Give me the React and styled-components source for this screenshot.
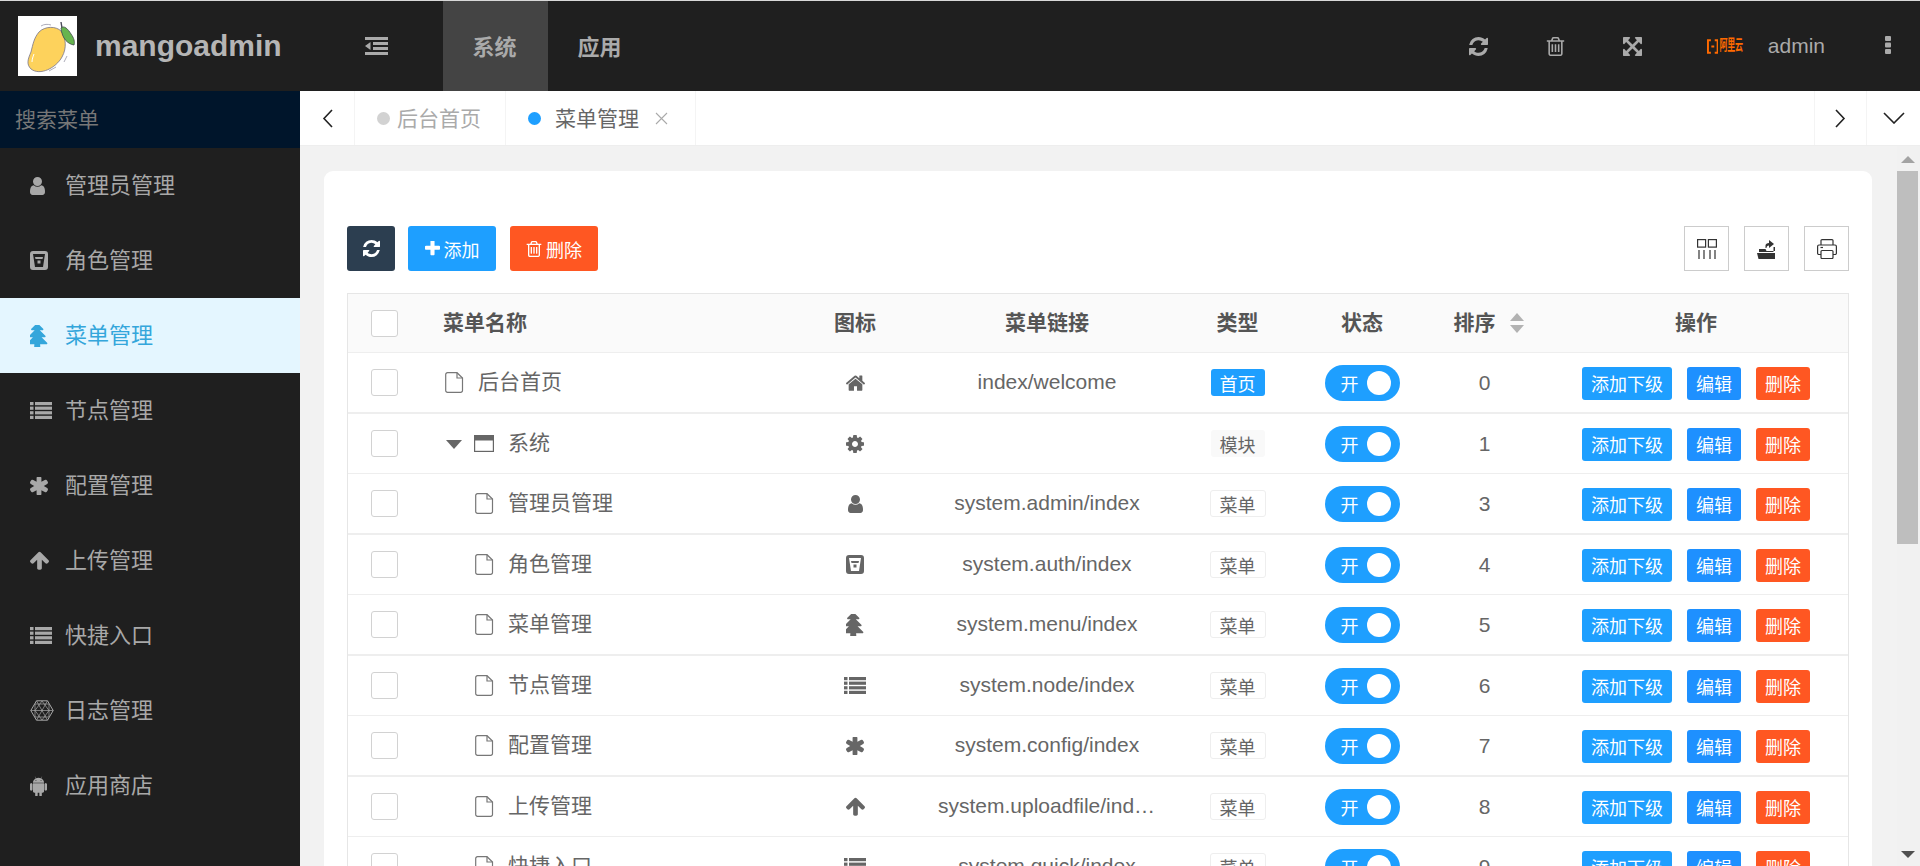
import React from "react";
import styled, { createGlobalStyle } from "styled-components";

const FONT = `"Liberation Sans", "Noto Sans CJK SC", sans-serif`;

const Global = createGlobalStyle`
  html, body { margin: 0; padding: 0; height: 100%; overflow: hidden; background: #f2f2f2; }
  body { font-family: ${FONT}; }
  * { box-sizing: border-box; }
`;

const Page = styled.div`
  width: 1920px; height: 866px; overflow: hidden; display: flex; flex-direction: column;
  border-top: 1px solid #d8d8d8;
`;
const Header = styled.header`
  height: 90px; flex: none; background: #1f1f1f; display: flex; align-items: stretch;
`;
const Brand = styled.div`
  width: 300px; flex: none; display: flex; align-items: center; padding-left: 18px; gap: 18px;
`;
const LogoBox = styled.div`
  width: 59px; height: 60px; background: #fff; flex: none; display: flex;
`;
const BrandName = styled.span`
  color: #b5b5b5; font-size: 30px; font-weight: 700; line-height: 1;
`;
const ToggleBtn = styled.div`
  width: 143px; flex: none; display: flex; align-items: center; padding-left: 65px; color: #aaa;
`;
const TopTab = styled.div`
  width: 105px; flex: none; display: flex; align-items: center; justify-content: center;
  font-size: 22px; font-weight: 700; color: #aaa; padding: 0 2px 3px 0;
  background: ${(p) => (p.$active ? "#444" : "transparent")};
`;
const HeaderRight = styled.div`
  margin-left: auto; display: flex; align-items: center; padding-right: 29px;
`;
const HeadIcon = styled.div`
  width: 77px; display: flex; justify-content: center; color: #aaa;
`;
const Aliyun = styled.div`
  display: flex; align-items: center; gap: 1px; margin-left: 36px; color: #ff6a00; width: 36px;
`;
const AliyunText = styled.span`
  font-size: 8px; font-weight: 700; line-height: 8px; white-space: nowrap; transform: scaleY(1.8); letter-spacing: -0.2px;
`;
const AdminName = styled.span`
  margin-left: 25px; font-size: 21px; color: #aaa;
`;
const Dots = styled.div`
  margin-left: 60px; color: #aaa; display: flex; margin-top: -3px;
`;
const Body = styled.div`
  flex: 1; display: flex; min-height: 0;
`;
const Sidebar = styled.aside`
  width: 300px; flex: none; background: #1f1f1f;
`;
const SearchBox = styled.div`
  height: 57px; background: #00152b; color: #777; font-size: 21px; padding: 0 0 3px 15px;
  display: flex; align-items: center;
`;
const SideItem = styled.div`
  height: 75px; display: flex; align-items: center; padding-left: 30px;
  background: ${(p) => (p.$active ? "#e4f6ff" : "transparent")};
  color: ${(p) => (p.$active ? "#34a6db" : "#a8a8a8")};
`;
const SideIconSlot = styled.span`
  width: 35px; flex: none; display: flex; align-items: center;
`;
const SideLabel = styled.span`
  font-size: 22px; line-height: 1;
`;
const Main = styled.main`
  flex: 1; min-width: 0; display: flex; flex-direction: column;
`;
const TabBar = styled.div`
  height: 55px; flex: none; background: #fff; display: flex; border-bottom: 1px solid #eee;
`;
const ArrowCell = styled.div`
  width: ${(p) => p.$w}px; flex: none; display: flex; align-items: center; justify-content: center;
  border-left: ${(p) => (p.$left ? "1px solid #f4f4f4" : "none")};
  border-right: ${(p) => (p.$right ? "1px solid #f4f4f4" : "none")};
`;
const PageTab = styled.div`
  width: ${(p) => p.$w}px; flex: none; display: flex; align-items: center;
  padding-left: 22px; border-right: 1px solid #f4f4f4;
  color: ${(p) => (p.$active ? "#666" : "#aaa")}; font-size: 21px;
`;
const TabText = styled.span`
  padding-bottom: 3px;
`;
const TabDot = styled.i`
  width: 13px; height: 13px; border-radius: 50%; flex: none; margin-right: ${(p) => p.$gap}px;
  background: ${(p) => p.$color};
`;
const TabClose = styled.span`
  display: flex; margin-left: 16px;
`;
const TabSpacer = styled.div`
  flex: 1;
`;
const ContentRow = styled.div`
  flex: 1; min-height: 0; display: flex;
`;
const Scroller = styled.div`
  flex: 1; min-width: 0; overflow: hidden; padding: 25px 25px 0 24px;
`;
const Card = styled.section`
  background: #fff; border-radius: 9px 9px 0 0; padding: 55px 23px 0; height: 1200px;
`;
const Toolbar = styled.div`
  display: flex; height: 45px; align-items: stretch;
`;
const ToolBtn = styled.div`
  width: ${(p) => p.$w}px; margin-right: ${(p) => p.$mr}px; background: ${(p) => p.$bg};
  border-radius: 3px; display: flex; align-items: center; justify-content: center; gap: 4px;
  color: #fff; font-size: 18px;
`;
const ToolRight = styled.div`
  margin-left: auto; display: flex; gap: 15px;
`;
const ToolSquare = styled.div`
  width: 45px; border: 1px solid #ccc; display: flex; align-items: center; justify-content: center;
`;
const Table = styled.div`
  margin-top: 22px; border: 1px solid #e6e6e6; border-bottom: none; color: #666;
`;
const COLS = "74px 370px 126px 258px 123px 126px 119px 1fr";
const HeadRow = styled.div`
  display: grid; grid-template-columns: ${COLS}; height: 59px; background: #fafafa;
  border-bottom: 1px solid #eee; align-items: center;
`;
const Row = styled.div`
  display: grid; grid-template-columns: ${COLS}; height: ${(p) => (p.$thick ? 61 : 60)}px;
  border-bottom: ${(p) => (p.$thick ? 2 : 1)}px solid #eee; align-items: center;
`;
const CenterCell = styled.div`
  display: flex; align-items: center; justify-content: center; font-size: 21px; min-width: 0;
`;
const HeadCenter = styled(CenterCell)`
  font-weight: 700; color: #555; padding-bottom: 5px;
`;
const HeadSort = styled(HeadCenter)`
  padding-left: 8px;
`;
const HeadName = styled.div`
  font-weight: 700; color: #555; font-size: 21px; padding: 0 0 5px 21px;
`;
const Check = styled.div`
  width: 27px; height: 27px; border: 1px solid #d2d2d2; border-radius: 3px; background: #fff; margin-left: 23px;
`;
const NameCell = styled.div`
  display: flex; align-items: center; font-size: 21px; padding-left: ${(p) => p.$indent}px;
`;
const NameText = styled.span`
  padding-bottom: 5px;
`;
const FileIcon = styled.span`
  display: flex; margin-right: 14px;
`;
const Caret = styled.i`
  width: 0; height: 0; margin-right: 12px; margin-top: 2px;
  border-left: 8.5px solid transparent; border-right: 8.5px solid transparent; border-top: 9px solid #666;
`;
const LinkText = styled.div`
  padding: 0 20px 1px; font-size: 21px; text-align: center; white-space: nowrap; overflow: hidden; text-overflow: ellipsis;
`;
const TableIcon = styled.span`
  display: flex; color: #666;
`;
const Tag = styled.span`
  width: ${(p) => (p.$kind === "menu" ? 56 : 54)}px; height: 27px; border-radius: 3px; font-size: 18px;
  display: flex; align-items: center; justify-content: center;
  background: ${(p) => (p.$kind === "home" ? "#1e9fff" : p.$kind === "module" ? "#f9f9f9" : "#fff")};
  color: ${(p) => (p.$kind === "home" ? "#fff" : "#666")};
  border: ${(p) => (p.$kind === "menu" ? "1px solid #eee" : "none")};
`;
const Switch = styled.div`
  width: 75px; height: 36px; border-radius: 18px; background: #1e9fff; color: #fff; font-size: 18px;
  display: flex; align-items: center; padding-left: 16px; margin-top: 1px;
`;
const Knob = styled.i`
  width: 24px; height: 24px; border-radius: 50%; background: #fff; margin-left: 8px;
`;
const Sort = styled.span`
  display: flex; flex-direction: column; gap: 4px; margin: 5px 0 0 14px;
`;
const SortTri = styled.i`
  width: 0; height: 0; border-left: 7.5px solid transparent; border-right: 7.5px solid transparent;
  border-bottom: ${(p) => (p.$up ? "8px solid #b2b2b2" : "none")};
  border-top: ${(p) => (p.$up ? "none" : "8px solid #b2b2b2")};
`;
const Ops = styled.div`
  display: flex; padding-left: 38px; margin-top: 1px;
`;
const OpBtn = styled.span`
  width: ${(p) => p.$w}px; height: 33px; margin-right: 15px; border-radius: 3px; background: ${(p) => p.$bg};
  color: #fff; font-size: 18px; display: flex; align-items: center; justify-content: center;
`;
const ScrollTrack = styled.div`
  width: 23px; flex: none; background: #f1f1f1; display: flex; flex-direction: column; align-items: center;
  padding-right: 2px;
`;
const ScrollUp = styled.i`
  width: 0; height: 0; margin-top: 10px; margin-bottom: 8px; border-left: 7.5px solid transparent;
  border-right: 7.5px solid transparent; border-bottom: 7px solid #a3a3a3;
`;
const ScrollThumb = styled.div`
  width: 100%; height: 373px; background: #bebebe;
`;
const ScrollDown = styled.i`
  width: 0; height: 0; margin-top: auto; margin-bottom: 8px; border-left: 7.5px solid transparent;
  border-right: 7.5px solid transparent; border-top: 7px solid #505050;
`;

const GLYPHS = {
  user: { vb: "256 128 1280 1536", w: 15, h: 18, d: "M1536 1399q0 109-62.5 187t-150.5 78h-854q-88 0-150.5-78t-62.5-187q0-85 8.5-160.5t31.5-152 58.5-131 94-89 134.5-34.5q131 128 313 128t313-128q76 0 134.5 34.5t94 89 58.5 131 31.5 152 8.5 160.5zm-256-887q0 159-112.5 271.5t-271.5 112.5-271.5-112.5-112.5-271.5 112.5-271.5 271.5-112.5 271.5 112.5 112.5 271.5z" },
  tree: { vb: "288 128 1216 1600", w: 18, h: 22, d: "M1504 1472q0 26-19 45t-45 19h-462q1 17 6 87.5t5 108.5q0 25-18 43t-43 18h-320q-25 0-43-18t-18-43q0-38 5-108.5t6-87.5h-462q-26 0-45-19t-19-45 19-45l402-403h-229q-26 0-45-19t-19-45 19-45l402-403h-197q-26 0-45-19t-19-45 19-45l384-384q19-19 45-19t45 19l384 384q19 19 19 45t-19 45-45 19h-197l402 403q19 19 19 45t-19 45-45 19h-229l402 403q19 19 19 45z" },
  asterisk: { vb: "180 180 1432 1432", w: 18, h: 18, d: "M1546 1050q46 26 59.5 77.5t-12.5 97.5l-64 110q-26 46-77.5 59.5t-97.5-12.5l-266-153v307q0 52-38 90t-90 38h-128q-52 0-90-38t-38-90v-307l-266 153q-46 26-97.5 12.5t-77.5-59.5l-64-110q-26-46-12.5-97.5t59.5-77.5l266-154-266-154q-46-26-59.5-77.5t12.5-97.5l64-110q26-46 77.5-59.5t97.5 12.5l266 153v-307q0-52 38-90t90-38h128q52 0 90 38t38 90v307l266-153q46-26 97.5-12.5t77.5 59.5l64 110q26 46 12.5 97.5t-59.5 77.5l-266 154z" },
  arrowUp: { vb: "117 160 1558 1500", w: 19, h: 19, d: "M1675 971q0 51-37 90l-75 75q-38 38-91 38-54 0-90-38l-294-293v704q0 52-37.5 84.5t-90.5 32.5h-128q-53 0-90.5-32.5t-37.5-84.5v-704l-294 293q-36 38-90 38t-90-38l-75-75q-38-38-38-90 0-53 38-91l651-651q35-37 90-37 54 0 91 37l651 651q37 39 37 91z" },
  android: { vb: "0 120 1408 1580", w: 17, h: 20, d: "M493 483q16 0 27.5-11.5t11.5-27.5-11.5-27.5-27.5-11.5-27 11.5-11 27.5 11 27.5 27 11.5zm422 0q16 0 27-11.5t11-27.5-11-27.5-27-11.5-27.5 11.5-11.5 27.5 11.5 27.5 27.5 11.5zm-812 184q42 0 72 30t30 72v430q0 43-29.5 73t-72.5 30-73-30-30-73v-430q0-42 30-72t73-30zm1060 19v666q0 46-32 78t-77 32h-75v227q0 43-30 73t-73 30-73-30-30-73v-227h-138v227q0 43-30 73t-73 30q-42 0-72-30t-30-73l-1-227h-74q-46 0-78-32t-32-78v-666h918zm-232-405q107 55 171 153.5t64 215.5h-925q0-117 64-215.5t172-153.5l-71-131q-7-13 5-20 13-6 20 6l72 132q95-42 201-42t201 42l72-132q7-12 20-6 12 7 5 20zm477 488v430q0 43-30 73t-73 30q-42 0-72-30t-30-73v-430q0-43 30-72.5t72-29.5q43 0 73 29.5t30 72.5z" },
  home: { vb: "96 224 1600 1312", w: 19, h: 16, d: "M1472 992v480q0 26-19 45t-45 19h-384v-384h-256v384h-384q-26 0-45-19t-19-45v-480q0-1 .5-3t.5-3l575-474 575 474q1 2 1 6zm223-69l-62 74q-8 9-21 11h-3q-13 0-21-7l-692-577-692 577q-12 8-24 7-13-2-21-11l-62-74q-8-10-7-23.5t11-21.5l719-599q32-26 76-26t76 26l244 204v-195q0-14 9-23t23-9h192q14 0 23 9t9 23v408l219 182q10 8 11 21.5t-7 23.5z" },
  cog: { vb: "128 128 1536 1536", w: 18, h: 18, d: "M1152 896q0-106-75-181t-181-75-181 75-75 181 75 181 181 75 181-75 75-181zm512-109v222q0 12-8 23t-20 13l-185 28q-19 54-39 91 35 50 107 138 10 12 10 25t-9 23q-27 37-99 108t-94 71q-12 0-26-9l-138-108q-44 23-91 38-16 136-29 186-7 28-36 28h-222q-14 0-24.5-8.5t-11.5-21.5l-28-184q-49-16-90-37l-141 107q-10 9-25 9-14 0-25-11-126-114-165-168-7-10-7-23 0-12 8-23 15-21 51-66.5t54-70.5q-27-50-41-99l-183-27q-13-2-21-12.5t-8-23.5v-222q0-12 8-23t19-13l186-28q14-46 39-92-40-57-107-138-10-12-10-24 0-10 9-23 26-36 98.5-107.5t94.5-71.5q13 0 26 10l138 107q44-23 91-38 16-136 29-186 7-28 36-28h222q14 0 24.5 8.5t11.5 21.5l28 184q49 16 90 37l142-107q9-9 24-9 13 0 25 10 129 119 165 170 7 8 7 22 0 12-8 23-15 21-51 66.5t-54 70.5q26 50 41 98l183 28q13 2 21 12.5t8 23.5z" },
  refresh: { vb: "128 128 1536 1536", w: 19, h: 19, d: "M1639 1056q0 5-1 7-64 268-268 434.5t-478 166.5q-146 0-282.5-55t-243.5-157l-129 129q-19 19-45 19t-45-19-19-45v-448q0-26 19-45t45-19h448q26 0 45 19t19 45-19 45l-137 137q71 66 161 102t187 36q134 0 250-65t186-179q11-17 53-117 8-23 30-23h192q13 0 22.5 9.5t9.5 22.5zm25-800v448q0 26-19 45t-45 19h-448q-26 0-45-19t-19-45 19-45l138-138q-148-137-349-137-134 0-250 65t-186 179q-11 17-53 117-8 23-30 23h-199q-13 0-22.5-9.5t-9.5-22.5v-7q65-268 270-434.5t480-166.5q146 0 284 55.5t245 156.5l130-129q19-19 45-19t45 19 19 45z" },
  trash: { vb: "128 128 1536 1536", w: 19, h: 19, d: "M704 736v576q0 14-9 23t-23 9h-64q-14 0-23-9t-9-23v-576q0-14 9-23t23-9h64q14 0 23 9t9 23zm256 0v576q0 14-9 23t-23 9h-64q-14 0-23-9t-9-23v-576q0-14 9-23t23-9h64q14 0 23 9t9 23zm256 0v576q0 14-9 23t-23 9h-64q-14 0-23-9t-9-23v-576q0-14 9-23t23-9h64q14 0 23 9t9 23zm128 724v-948h-896v948q0 22 7 40.5t14.5 27 10.5 8.5h832q3 0 10.5-8.5t14.5-27 7-40.5zm-672-1076h448l-48-117q-7-9-17-11h-317q-10 2-17 11zm928 32v64q0 14-9 23t-23 9h-96v948q0 83-47 143.5t-113 60.5h-832q-66 0-113-58.5t-47-141.5v-952h-96q-14 0-23-9t-9-23v-64q0-14 9-23t23-9h309l70-167q15-37 54-63t79-26h320q40 0 79 26t54 63l70 167h309q14 0 23 9t9 23z" },
  expand: { vb: "128 128 1536 1536", w: 19, h: 19, d: "M1411 541l-355 355 355 355 144-144q29-31 70-14 39 17 39 59v448q0 26-19 45t-45 19h-448q-42 0-59-40-17-39 14-69l144-144-355-355-355 355 144 144q31 30 14 69-17 40-59 40h-448q-26 0-45-19t-19-45v-448q0-42 40-59 39-17 69 14l144 144 355-355-355-355-144 144q-19 19-45 19-12 0-24-5-40-17-40-59v-448q0-26 19-45t45-19h448q42 0 59 40 17 39-14 69l-144 144 355 355 355-355-144-144q-31-30-14-69 17-40 59-40h448q26 0 45 19t19 45v448q0 42-39 59-13 5-25 5-26 0-45-19z" },
  plus: { vb: "192 192 1408 1408", w: 15, h: 15, d: "M1600 736v192q0 40-28 68t-68 28h-416v416q0 40-28 68t-68 28h-192q-40 0-68-28t-28-68v-416h-416q-40 0-68-28t-28-68v-192q0-40 28-68t68-28h416v-416q0-40 28-68t68-28h192q40 0 68 28t28 68v416h416q40 0 68 28t28 68z" },
};

const Fa = ({ name, w, h }) => {
  const g = GLYPHS[name];
  return (
    <svg width={w || g.w} height={h || g.h} viewBox={g.vb} fill="currentColor">
      <path d={g.d} />
    </svg>
  );
};

const Mango = () => (
  <svg width="59" height="60" viewBox="0 0 59 60">
    <path d="M13 53C8 48 10 43 13 36C15 28 16 22 21 16C27 10 38 10 43 15C48 22 49 32 44 41C38 52 22 60 13 53Z" fill="#fdd25c" stroke="#77758c" strokeWidth="0.8" />
    <path d="M43 6L44 12" stroke="#4a4a5a" strokeWidth="1.4" />
    <path d="M43 12C46 9 50 13 53 18C56 22 57 26 56 29C50 28 44 23 43 12Z" fill="#66b44e" stroke="#3f4a4a" strokeWidth="0.8" />
    <path d="M14 46C14 43 15 41 16 38" stroke="#fff" strokeWidth="1" fill="none" />
    <path d="M23 10C26 8 30 8 33 9M49 40L46 46M31 55L38 51" stroke="#8a8a9c" strokeWidth="0.7" fill="none" />
  </svg>
);

const OutdentGlyph = () => (
  <svg width="23" height="18" viewBox="0 0 23 18" fill="currentColor">
    <path d="M0 0H23V3H0ZM8 5H23V8H8ZM8 10H23V13H8ZM0 15H23V18H0ZM0 9L5.5 5V13Z" />
  </svg>
);

const DotsGlyph = () => (
  <svg width="6" height="18" viewBox="0 0 6 18" fill="currentColor">
    <rect x="0" y="0" width="6" height="5" rx="1" />
    <rect x="0" y="6.5" width="6" height="5" rx="1" />
    <rect x="0" y="13" width="6" height="5" rx="1" />
  </svg>
);

const ListIcon = () => (
  <svg width="22" height="17" viewBox="0 0 22 17" fill="currentColor">
    {[0, 4.6, 9.2, 13.8].map((y) => (
      <g key={y}>
        <rect x="0" y={y} width="3.5" height="3.2" />
        <rect x="5" y={y} width="17" height="3.2" />
      </g>
    ))}
  </svg>
);

const RoleIcon = () => (
  <svg width="18" height="19" viewBox="0 0 18 19" fill="currentColor" fillRule="evenodd">
    <path d="M3 0H15A3 3 0 0 1 18 3V16A3 3 0 0 1 15 19H3A3 3 0 0 1 0 16V3A3 3 0 0 1 3 0ZM3 3L5 16H13L15 3Z" />
    <path d="M5 6H13L12.5 8H5.5ZM7.5 9.5H10.5V12.5H7.5Z" />
  </svg>
);

const HexIcon = () => (
  <svg width="24" height="21" viewBox="0 0 24 21" fill="none" stroke="currentColor" strokeWidth="1">
    <path d="M6.5 .8H17.5L23.2 10.5L17.5 20.2H6.5L.8 10.5Z" />
    <path d="M6.5 .8L17.5 20.2M17.5 .8L6.5 20.2M.8 10.5H23.2M5 4H19L19 17H5ZM12 1L5 10.5L12 20L19 10.5Z" strokeWidth="0.7" />
  </svg>
);

const FileGlyph = () => (
  <svg width="19" height="21" viewBox="0 0 19 21" fill="none" stroke="#777" strokeWidth="1.2">
    <path d="M2.5 .7H12L17.5 6V18.5A1.8 1.8 0 0 1 15.7 20.3H2.5A1.8 1.8 0 0 1 .7 18.5V2.5A1.8 1.8 0 0 1 2.5 .7Z" />
    <path d="M12 .7V6H17.5" />
  </svg>
);

const WindowGlyph = () => (
  <svg width="20" height="17" viewBox="0 0 20 17">
    <rect x=".6" y=".6" width="18.8" height="15.8" fill="none" stroke="#666" strokeWidth="1.2" />
    <rect x="0" y="0" width="20" height="5.5" fill="#666" />
  </svg>
);

const Chevron = ({ d, w, h }) => (
  <svg width={w} height={h} viewBox={`0 0 ${w} ${h}`} fill="none" stroke="#222" strokeWidth="1.6">
    <path d={d} />
  </svg>
);

const ColsGlyph = () => (
  <svg width="20" height="20" viewBox="0 0 20 20" fill="none" stroke="#333" strokeWidth="1.2">
    <rect x=".6" y=".6" width="8" height="7.5" />
    <rect x="11.4" y=".6" width="8" height="7.5" />
    <path d="M2 11V20M7 11V20M13 11V20M18 11V20" />
  </svg>
);
const ExportGlyph = () => (
  <svg width="19" height="20" viewBox="0 0 19 20" fill="#333">
    <path d="M0 14H18V20H1.5Z" />
    <path d="M2 13V10H8.5L9.5 12H16.5V13Z" />
    <path d="M8.5 9V6.5C8.5 5 10 4 12 4V1L17 5L12 9V6.5C10.5 6.5 9.5 7.5 9.5 9Z" />
    <path d="M16.5 8H18V12H16.5Z" />
  </svg>
);
const PrintGlyph = () => (
  <svg width="20" height="20" viewBox="0 0 20 20" fill="none" stroke="#333" strokeWidth="1.2">
    <path d="M4 6V1.6A1 1 0 0 1 5 .6H15A1 1 0 0 1 16 1.6V6" />
    <path d="M4 15.5H2A1.4 1.4 0 0 1 .6 14V7.5A1.5 1.5 0 0 1 2 6H18A1.5 1.5 0 0 1 19.4 7.5V14A1.4 1.4 0 0 1 18 15.5H16" />
    <rect x="4" y="11.5" width="12" height="8" rx="1" />
    <path d="M3.5 8.5H6" />
  </svg>
);

const sideItems = [
  ["管理员管理", <Fa name="user" />],
  ["角色管理", <RoleIcon />],
  ["菜单管理", <Fa name="tree" />, true],
  ["节点管理", <ListIcon />],
  ["配置管理", <Fa name="asterisk" />],
  ["上传管理", <Fa name="arrowUp" />],
  ["快捷入口", <ListIcon />],
  ["日志管理", <HexIcon />],
  ["应用商店", <Fa name="android" />],
];

const rows = [
  { name: "后台首页", icon: <Fa name="home" />, link: "index/welcome", kind: "home", tag: "首页", sort: 0, level: 0 },
  { name: "系统", icon: <Fa name="cog" />, link: "", kind: "module", tag: "模块", sort: 1, level: 1 },
  { name: "管理员管理", icon: <Fa name="user" />, link: "system.admin/index", kind: "menu", tag: "菜单", sort: 3, level: 2 },
  { name: "角色管理", icon: <RoleIcon />, link: "system.auth/index", kind: "menu", tag: "菜单", sort: 4, level: 2 },
  { name: "菜单管理", icon: <Fa name="tree" />, link: "system.menu/index", kind: "menu", tag: "菜单", sort: 5, level: 2 },
  { name: "节点管理", icon: <ListIcon />, link: "system.node/index", kind: "menu", tag: "菜单", sort: 6, level: 2 },
  { name: "配置管理", icon: <Fa name="asterisk" />, link: "system.config/index", kind: "menu", tag: "菜单", sort: 7, level: 2 },
  { name: "上传管理", icon: <Fa name="arrowUp" />, link: "system.uploadfile/index", kind: "menu", tag: "菜单", sort: 8, level: 2 },
  { name: "快捷入口", icon: <ListIcon />, link: "system.quick/index", kind: "menu", tag: "菜单", sort: 9, level: 2 },
];

const indentFor = [23, 24, 53];

export default function App() {
  return (
    <Page>
      <Global />
      <Header>
        <Brand>
          <LogoBox><Mango /></LogoBox>
          <BrandName>mangoadmin</BrandName>
        </Brand>
        <ToggleBtn><OutdentGlyph /></ToggleBtn>
        <TopTab $active>系统</TopTab>
        <TopTab>应用</TopTab>
        <HeaderRight>
          <HeadIcon><Fa name="refresh" /></HeadIcon>
          <HeadIcon><Fa name="trash" /></HeadIcon>
          <HeadIcon><Fa name="expand" /></HeadIcon>
          <Aliyun>
            <svg width="12" height="15" viewBox="0 0 12 15" fill="none" stroke="currentColor" strokeWidth="2">
              <path d="M4 1H1V14H4M8 1H11V14H8M4.5 7.5H7.5" />
            </svg>
            <AliyunText>阿里云</AliyunText>
          </Aliyun>
          <AdminName>admin</AdminName>
          <Dots><DotsGlyph /></Dots>
        </HeaderRight>
      </Header>
      <Body>
        <Sidebar>
          <SearchBox>搜索菜单</SearchBox>
          {sideItems.map(([label, icon, active]) => (
            <SideItem key={label} $active={active}>
              <SideIconSlot>{icon}</SideIconSlot>
              <SideLabel>{label}</SideLabel>
            </SideItem>
          ))}
        </Sidebar>
        <Main>
          <TabBar>
            <ArrowCell $w={55} $right>
              <Chevron w={11} h={19} d="M10 1L2 9.5L10 18" />
            </ArrowCell>
            <PageTab $w={151}>
              <TabDot $color="#d2d2d2" $gap={7} /><TabText>后台首页</TabText>
            </PageTab>
            <PageTab $w={190} $active>
              <TabDot $color="#1e9fff" $gap={14} /><TabText>菜单管理</TabText>
              <TabClose>
                <svg width="13" height="13" viewBox="0 0 13 13" stroke="#aaa" strokeWidth="1.1"><path d="M1 1L12 12M12 1L1 12" /></svg>
              </TabClose>
            </PageTab>
            <TabSpacer />
            <ArrowCell $w={52} $left>
              <Chevron w={11} h={19} d="M1 1L9 9.5L1 18" />
            </ArrowCell>
            <ArrowCell $w={54} $left>
              <Chevron w={22} h={12} d="M1 1L11 11L21 1" />
            </ArrowCell>
          </TabBar>
          <ContentRow>
            <Scroller>
              <Card>
                <Toolbar>
                  <ToolBtn $w={48} $mr={13} $bg="#2c3e50"><Fa name="refresh" w={17} h={17} /></ToolBtn>
                  <ToolBtn $w={88} $mr={14} $bg="#1e9fff"><Fa name="plus" />添加</ToolBtn>
                  <ToolBtn $w={88} $mr={0} $bg="#ff5722"><Fa name="trash" w={16} h={16} />删除</ToolBtn>
                  <ToolRight>
                    <ToolSquare><ColsGlyph /></ToolSquare>
                    <ToolSquare><ExportGlyph /></ToolSquare>
                    <ToolSquare><PrintGlyph /></ToolSquare>
                  </ToolRight>
                </Toolbar>
                <Table>
                  <HeadRow>
                    <Check />
                    <HeadName>菜单名称</HeadName>
                    <HeadCenter>图标</HeadCenter>
                    <HeadCenter>菜单链接</HeadCenter>
                    <HeadCenter>类型</HeadCenter>
                    <HeadCenter>状态</HeadCenter>
                    <HeadSort>排序<Sort><SortTri $up /><SortTri /></Sort></HeadSort>
                    <HeadCenter>操作</HeadCenter>
                  </HeadRow>
                  {rows.map((r, i) => (
                    <Row key={r.name} $thick={i % 2 === 0}>
                      <Check />
                      <NameCell $indent={indentFor[r.level]}>
                        {r.level === 1 && <Caret />}
                        <FileIcon>{r.level === 1 ? <WindowGlyph /> : <FileGlyph />}</FileIcon>
                        <NameText>{r.name}</NameText>
                      </NameCell>
                      <CenterCell><TableIcon>{r.icon}</TableIcon></CenterCell>
                      <LinkText>{r.link}</LinkText>
                      <CenterCell><Tag $kind={r.kind}>{r.tag}</Tag></CenterCell>
                      <CenterCell><Switch>开<Knob /></Switch></CenterCell>
                      <CenterCell>{r.sort}</CenterCell>
                      <Ops>
                        <OpBtn $w={90} $bg="#1e9fff">添加下级</OpBtn>
                        <OpBtn $w={54} $bg="#1e90ff">编辑</OpBtn>
                        <OpBtn $w={54} $bg="#ff5722">删除</OpBtn>
                      </Ops>
                    </Row>
                  ))}
                </Table>
              </Card>
            </Scroller>
            <ScrollTrack>
              <ScrollUp />
              <ScrollThumb />
              <ScrollDown />
            </ScrollTrack>
          </ContentRow>
        </Main>
      </Body>
    </Page>
  );
}
